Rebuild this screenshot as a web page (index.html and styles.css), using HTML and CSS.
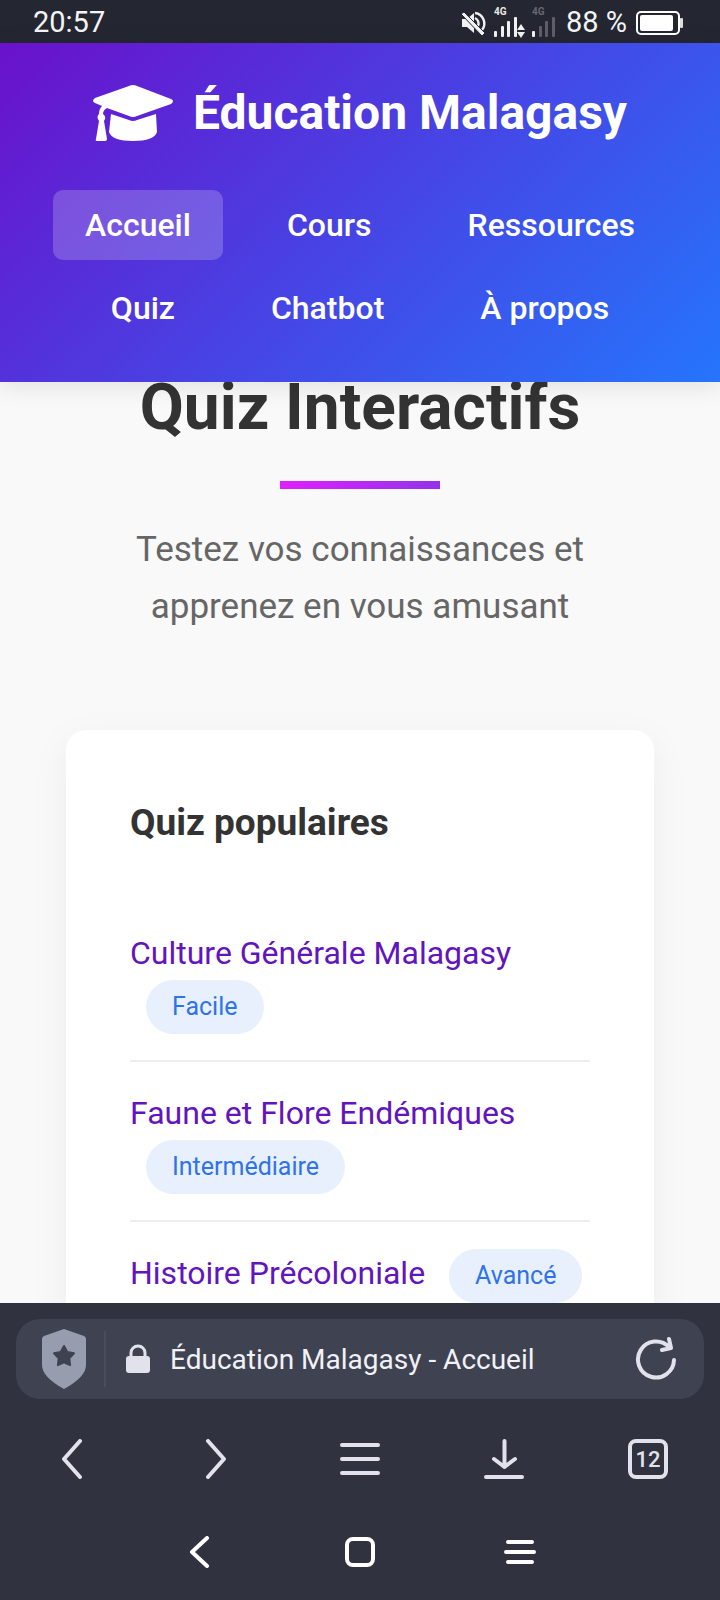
FILE: index.html
```html
<!DOCTYPE html>
<html lang="fr">
<head>
<meta charset="utf-8">
<meta name="viewport" content="width=device-width, initial-scale=1">
<title>Éducation Malagasy - Accueil</title>
<link rel="stylesheet" href="styles.css">
</head>
<body>
<div class="screen">
  <div class="status">
    <span class="status-time">20:57</span>
    <div class="status-icons">
      <svg class="status-signals" width="100" height="36" viewBox="0 0 100 36" aria-hidden="true">
        <g fill="#f2f2f2">
          <path d="M2 14h5l7-6v20l-7-6H2z"/>
          <g fill="none" stroke="#f2f2f2" stroke-width="2.4">
            <path d="M15 8a10.500 10.500 0 0 1 7 17"/>
            <path d="M15 13a6 6 0 0 1 3 8"/>
          </g>
          <path d="M1 9l3-2 21 21-3 3z" stroke="#242632" stroke-width="1"/>
          <rect x="34" y="26" width="3" height="6" rx="1"/>
          <rect x="41" y="21" width="3" height="11" rx="1"/>
          <rect x="47" y="16" width="3" height="16" rx="1"/>
          <rect x="54" y="12" width="3" height="20" rx="1"/>
          <path d="M57 25l4-6 4 6zM57 27h8l-4 6z"/>
          <rect x="72" y="26" width="3" height="6" rx="1"/>
        </g>
        <g fill="#5d5e69">
          <rect x="79" y="21" width="3" height="11" rx="1"/>
          <rect x="85" y="16" width="3" height="16" rx="1"/>
          <rect x="92" y="12" width="3" height="20" rx="1"/>
        </g>
        <text class="net" x="34" y="10">4G</text>
        <text class="net net-off" x="72" y="10">4G</text>
      </svg>
      <span class="status-battery">88 %</span>
      <svg width="50" height="26" viewBox="0 0 50 26" aria-hidden="true">
        <rect x="2" y="2" width="42" height="22" rx="4" fill="none" stroke="#fff" stroke-width="2"/>
        <rect x="5" y="5" width="33" height="16" rx="2" fill="#fff"/>
        <rect x="45" y="8" width="3" height="10" rx="1" fill="#ddd"/>
      </svg>
    </div>
  </div>

  <header class="header">
    <div class="logo">
      <svg width="80" height="64" viewBox="0 0 80 64" fill="#fff" aria-hidden="true">
        <path d="M36 5q4-2 8 0l34 13q4 2 0 5L44 35q-4 2-8 0L14 27q-4 2-4 6 4 3 1 7l3 18q0 2-2 2H4q-2 0-1-2l3-18q-3-4 0-7 0-5 3-8L2 22q-4-2 0-5z"/>
        <path d="M18 33l18 6q4 2 8 0l19-6 1 18q-3 9-24 9t-24-9z"/>
      </svg>
      <span class="logo-text">Éducation Malagasy</span>
    </div>
    <nav class="nav">
      <a class="nav-link active" href="#">Accueil</a>
      <a class="nav-link" href="#">Cours</a>
      <a class="nav-link" href="#">Ressources</a>
      <a class="nav-link" href="#">Quiz</a>
      <a class="nav-link" href="#">Chatbot</a>
      <a class="nav-link" href="#">À propos</a>
    </nav>
  </header>

  <main class="content">
    <div class="section-title">
      <h1>Quiz Interactifs</h1>
      <p>Testez vos connaissances et apprenez en vous amusant</p>
    </div>
    <section class="card">
      <h2>Quiz populaires</h2>
      <ul class="quiz-list">
        <li><a href="#">Culture Générale Malagasy</a> <span class="badge">Facile</span></li>
        <li><a href="#">Faune et Flore Endémiques</a> <span class="badge">Intermédiaire</span></li>
        <li><a href="#">Histoire Précoloniale</a> <span class="badge">Avancé</span></li>
      </ul>
    </section>
  </main>

  <footer class="browser">
    <div class="url-bar">
      <svg width="44" height="60" viewBox="0 0 44 60" aria-hidden="true">
        <path d="M22 0l20 7q2 1 2 3v26q0 12-22 24Q0 48 0 36V10q0-2 2-3z" fill="#979caf"/>
        <path d="M22 17l3.300 6 6.700 1.300-4.700 5 .8 6.800-6.100-2.700-6.100 2.700.8-6.800-4.700-5 6.700-1.300z" fill="#3f4250" stroke="#3f4250" stroke-width="2" stroke-linejoin="round"/>
      </svg>
      <span class="divider"></span>
      <svg width="24" height="30" viewBox="0 0 24 30" aria-hidden="true">
        <path d="M5 13V9a7 7 0 0 1 14 0v4" fill="none" stroke="#e1e2ec" stroke-width="3"/>
        <rect y="12" width="24" height="17" rx="3" fill="#e1e2ec"/>
      </svg>
      <span class="url-text">Éducation Malagasy - Accueil</span>
      <button class="icon-button reload" aria-label="Actualiser">
        <svg width="44" height="48" viewBox="0 0 44 48">
          <path d="M40 25A18 18 0 1 1 35 12M35 4l2 9-9 2"/>
        </svg>
      </button>
    </div>
    <div class="toolbar">
      <button class="icon-button" aria-label="Précédent"><svg width="40" height="40" viewBox="0 0 40 40"><path d="M28 2L12 20l16 18"/></svg></button>
      <button class="icon-button" aria-label="Suivant"><svg width="40" height="40" viewBox="0 0 40 40"><path d="M12 2l16 18-16 18"/></svg></button>
      <button class="icon-button" aria-label="Menu"><svg width="40" height="40" viewBox="0 0 40 40"><path d="M2 6h36M2 20h36M2 34h36"/></svg></button>
      <button class="icon-button" aria-label="Téléchargements"><svg width="40" height="40" viewBox="0 0 40 40"><path d="M20.500 2v26M10 20l10.500 8L31 20M2 38h36"/></svg></button>
      <button class="icon-button" aria-label="Onglets"><span class="tab-count">12</span></button>
    </div>
    <div class="system-nav">
      <button class="icon-button" aria-label="Retour"><svg width="32" height="32" viewBox="0 0 32 32"><path d="M23 2L8 16l15 14"/></svg></button>
      <button class="icon-button" aria-label="Accueil du téléphone"><svg width="32" height="32" viewBox="0 0 32 32"><rect x="3" y="3" width="26" height="26" rx="6"/></svg></button>
      <button class="icon-button" aria-label="Applications récentes"><svg width="32" height="32" viewBox="0 0 32 32"><path d="M4 6h24M2 16h28M4 26h24"/></svg></button>
    </div>
  </footer>
</div>
</body>
</html>
```

FILE: styles.css
```css
* {
  box-sizing: border-box;
  margin: 0;
  padding: 0;
}

body {
  font-family: Roboto, "Liberation Sans", sans-serif;
  font-size: 32px;
  line-height: 1.6;
  color: #333;
  background: #f9f9f9;
}

a {
  text-decoration: none;
}

.screen {
  display: flex;
  flex-direction: column;
  height: 100vh;
}

/* Phone status bar */
.status {
  display: flex;
  align-items: center;
  justify-content: space-between;
  height: 43px;
  padding: 2px 35px 0 33px;
  background: #242632;
  color: #f4f4f4;
  font-size: 29px;
  line-height: 41px;
}

.status-icons {
  display: flex;
  align-items: center;
}

.status-signals {
  margin-right: 6px;
}

.status-battery {
  margin-right: 8px;
}

.net {
  font-size: 10px;
  font-weight: 700;
  fill: #e8e8e8;
}

.net-off {
  fill: #666771;
}

/* Site header */
.header {
  position: relative;
  z-index: 1;
  padding: 32px 32px 48px;
  background: linear-gradient(135deg, #6a11cb 0%, #2575fc 100%);
  box-shadow: 0 4px 24px rgba(0, 0, 0, 0.1);
  color: #fff;
}

.logo {
  display: flex;
  align-items: center;
  justify-content: center;
  gap: 20px;
  margin-bottom: 38px;
  font-size: 48px;
  font-weight: 700;
}

.nav {
  display: flex;
  flex-wrap: wrap;
  justify-content: center;
  gap: 13px 32px;
  margin-bottom: -9px;
}

.nav-link {
  padding: 16px 32px;
  border-radius: 10px;
  color: #fff;
  font-weight: 500;
  line-height: 38px;
}

.nav-link.active {
  background: rgba(255, 255, 255, 0.2);
}

/* Page content */
.content {
  flex: 1;
  min-height: 0;
  overflow: hidden;
  padding: 0 66px;
}

.section-title {
  margin-bottom: 95px;
  text-align: center;
}

.section-title h1 {
  font-size: 64px;
  line-height: 52px;
}

.section-title h1::after {
  content: "";
  display: block;
  width: 160px;
  height: 8px;
  margin: 47px auto 0;
  background: linear-gradient(90deg, #e01fff, #9333ea);
}

.section-title p {
  max-width: 500px;
  margin: 32px auto 0;
  color: #666;
  font-size: 35px;
  line-height: 57px;
}

.card {
  padding: 64px;
  border-radius: 20px;
  background: #fff;
  box-shadow: 0 10px 40px rgba(0, 0, 0, 0.05);
}

.card h2 {
  margin-bottom: 50px;
  font-size: 37px;
  line-height: 58px;
}

.quiz-list {
  list-style: none;
}

.quiz-list li {
  padding: 26px 0;
  border-bottom: 2px solid #eee;
}

.quiz-list a {
  color: #6214bd;
}

.badge {
  display: inline-block;
  margin-left: 16px;
  padding: 6px 26px;
  border-radius: 27px;
  background: #e8f0fe;
  color: #2f73e8;
  font-size: 25px;
  line-height: 42px;
}

/* Browser and system controls */
.browser {
  padding: 16px 0 0;
  background: #31323f;
}

.url-bar {
  display: flex;
  align-items: center;
  height: 80px;
  margin: 0 16px;
  padding: 0 26px;
  border-radius: 24px;
  background: #3f4250;
  color: #f1f1f8;
  font-size: 28px;
}

.divider {
  width: 2px;
  height: 56px;
  margin: 0 20px 0 18px;
  background: #4c4c5a;
}

.url-text {
  flex: 1;
  padding-top: 3px;
  margin-left: 20px;
}

.icon-button {
  display: flex;
  align-items: center;
  justify-content: center;
  border: 0;
  background: none;
  color: #e1e2ec;
  font-family: inherit;
}

.icon-button svg {
  fill: none;
  stroke: currentColor;
  stroke-width: 4;
  stroke-linecap: round;
  stroke-linejoin: round;
}

.toolbar {
  display: grid;
  grid-template-columns: repeat(5, 1fr);
  height: 120px;
}

.tab-count {
  width: 40px;
  height: 40px;
  border: 4px solid;
  border-radius: 8px;
  font-size: 22px;
  font-weight: 500;
  line-height: 34px;
}

.system-nav {
  display: flex;
  justify-content: center;
  gap: 128px;
  height: 81px;
  padding-bottom: 16px;
}

.system-nav .icon-button {
  color: #fff;
}
```
